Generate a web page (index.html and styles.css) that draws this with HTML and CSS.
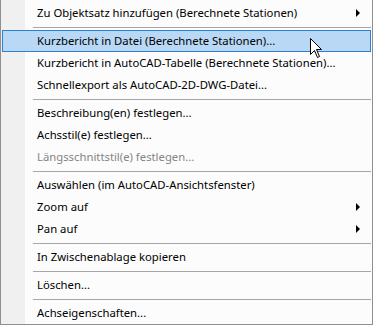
FILE: index.html
```html
<!DOCTYPE html>
<html lang="de">
<head>
    <meta charset="UTF-8">
    <title>Kontextmenü Achse</title>
    <link rel="stylesheet" href="styles.css">
</head>
<body>
    <div class="menu">
        <div class="item sub">Zu Objektsatz hinzufügen (Berechnete Stationen)</div>
        <div class="sep"></div>
        <div class="item hover">Kurzbericht in Datei (Berechnete Stationen)...
            <svg class="cursor" width="13" height="21" viewBox="0 0 13 21">
                <path d="M0.5 0.5 V16.5 L4.5 12.5 L7.5 19.5 L9.5 18.5 L6.5 11.5 H11.5 Z" fill="#fff" stroke="#000" stroke-width="1"/>
            </svg>
        </div>
        <div class="item">Kurzbericht in AutoCAD-Tabelle (Berechnete Stationen)...</div>
        <div class="item">Schnellexport als AutoCAD-2D-DWG-Datei...</div>
        <div class="sep"></div>
        <div class="item">Beschreibung(en) festlegen...</div>
        <div class="item">Achsstil(e) festlegen...</div>
        <div class="item disabled">Längsschnittstil(e) festlegen...</div>
        <div class="sep"></div>
        <div class="item">Auswählen (im AutoCAD-Ansichtsfenster)</div>
        <div class="item sub">Zoom auf</div>
        <div class="item sub">Pan auf</div>
        <div class="sep"></div>
        <div class="item">In Zwischenablage kopieren</div>
        <div class="sep"></div>
        <div class="item">Löschen...</div>
        <div class="sep"></div>
        <div class="item">Achseigenschaften...</div>
    </div>
</body>
</html>
```

FILE: styles.css
```css
body {
    margin: 0;
    background: #fff;
    font-family: "Noto Sans", "Open Sans", sans-serif;
    font-size: 11.3px;
    color: #000;
}
.menu {
    width: 371px;
    padding-top: 2px;
    border-left: 1px solid #8f8f8f;
    border-right: 1px solid #8f8f8f;
    border-bottom: 1px solid #8f8f8f;
    background: linear-gradient(to right, #f0f0f0 0, #f0f0f0 24px, #fcfcfc 24px);
}
.item {
    position: relative;
    height: 22px;
    line-height: 22px;
    padding-left: 35px;
    margin: 0 1px;
    white-space: nowrap;
    box-sizing: border-box;
}
.item.hover {
    background: #b8d8f5;
    border: 1px solid #2a7fd6;
    padding-left: 34px;
    line-height: 20px;
}
.item.disabled {
    color: #858585;
}
.item.sub::after {
    content: "";
    position: absolute;
    right: 11px;
    top: 7px;
    border-left: 4px solid #000;
    border-top: 4px solid transparent;
    border-bottom: 4px solid transparent;
}
.sep {
    height: 6px;
    margin-left: 32px;
    margin-right: 1px;
    background: linear-gradient(to bottom, transparent 3px, #a6a6a6 3px, #a6a6a6 4px, transparent 4px);
}
.cursor {
    position: absolute;
    left: 307px;
    top: 7px;
}
```
